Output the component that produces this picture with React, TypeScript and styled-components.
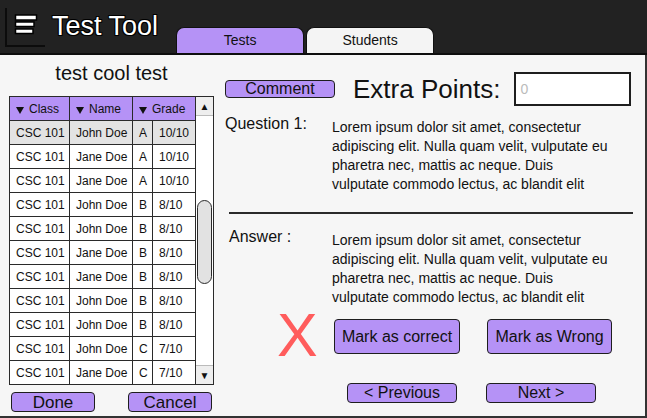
import React from "react";
import styled, { createGlobalStyle } from "styled-components";

const PURPLE = "#b592f6";
const INK = "#1e1e1e";

interface Row {
  name: string;
  letter: string;
  score: string;
}

const rows: Row[] = [
  { name: "John Doe", letter: "A", score: "10/10" },
  { name: "Jane Doe", letter: "A", score: "10/10" },
  { name: "Jane Doe", letter: "A", score: "10/10" },
  { name: "John Doe", letter: "B", score: "8/10" },
  { name: "John Doe", letter: "B", score: "8/10" },
  { name: "Jane Doe", letter: "B", score: "8/10" },
  { name: "Jane Doe", letter: "B", score: "8/10" },
  { name: "John Doe", letter: "B", score: "8/10" },
  { name: "John Doe", letter: "B", score: "8/10" },
  { name: "John Doe", letter: "C", score: "7/10" },
  { name: "Jane Doe", letter: "C", score: "7/10" },
];

const lorem =
  "Lorem ipsum dolor sit amet, consectetur adipiscing elit. Nulla quam velit, vulputate eu pharetra nec, mattis ac neque. Duis vulputate commodo lectus, ac blandit elit";

const Logo = () => (
  <LogoBox viewBox="0 0 52 53" width={52} height={53}>
    <path d="M6 8 V46 H45" fill="none" stroke="#0c0c0c" strokeWidth={2} />
    <rect x={15.5} y={15} width={21} height={5} fill="#fff" stroke="#000" strokeWidth={1.5} />
    <rect x={15.5} y={22} width={18.5} height={4.5} fill="#fff" stroke="#000" strokeWidth={1.5} />
    <rect x={15.5} y={29} width={17.5} height={4.5} fill="#fff" stroke="#000" strokeWidth={1.5} />
  </LogoBox>
);

const App = () => {
  return (
    <>
      <GlobalStyle />
      <Frame>
        <Header>
          <Logo />
          <Title>Test Tool</Title>
          <Tabs>
            <Tab $active>Tests</Tab>
            <Tab>Students</Tab>
          </Tabs>
        </Header>
        <Body>
          <LeftPanel>
            <ListTitle>test cool test</ListTitle>
            <TableArea>
              <GradeTable>
                <colgroup>
                  <col style={{ width: 60 }} />
                  <col style={{ width: 63 }} />
                  <col style={{ width: 20 }} />
                  <col style={{ width: 43 }} />
                </colgroup>
                <thead>
                  <tr>
                    <th>
                      <Caret />Class
                    </th>
                    <th>
                      <Caret />Name
                    </th>
                    <th colSpan={2}>
                      <Caret />Grade
                    </th>
                  </tr>
                </thead>
                <tbody>
                  {rows.map((r, i) => (
                    <BodyRow key={i} $selected={i === 0}>
                      <td>CSC 101</td>
                      <td>{r.name}</td>
                      <td>{r.letter}</td>
                      <td>{r.score}</td>
                    </BodyRow>
                  ))}
                </tbody>
              </GradeTable>
              <Scrollbar>
                <ScrollArrow $top>▲</ScrollArrow>
                <Track>
                  <Thumb />
                </Track>
                <ScrollArrow>▼</ScrollArrow>
              </Scrollbar>
            </TableArea>
            <ListActions>
              <Button $w={84} $h={20} $fs={17}>
                Done
              </Button>
              <Button $w={84} $h={20} $fs={17}>
                Cancel
              </Button>
            </ListActions>
          </LeftPanel>
          <RightPanel>
            <TopRow>
              <Button $w={110} $h={18} $fs={16}>
                Comment
              </Button>
              <ExtraLabel>Extra Points:</ExtraLabel>
              <PointsInput placeholder="0" />
            </TopRow>
            <QaRow>
              <QaLabel>Question 1:</QaLabel>
              <QaText>{lorem}</QaText>
            </QaRow>
            <Divider />
            <QaRow $answer>
              <QaLabel $indent={4}>Answer :</QaLabel>
              <QaText>{lorem}</QaText>
            </QaRow>
            <MarkRow>
              <WrongMark>X</WrongMark>
              <Button $w={126} $h={35} $fs={16}>
                Mark as correct
              </Button>
              <Button $w={125} $h={35} $fs={16}>
                Mark as Wrong
              </Button>
            </MarkRow>
            <NavRow>
              <Button $w={110} $h={20} $fs={16}>
                &lt; Previous
              </Button>
              <Button $w={110} $h={20} $fs={16}>
                Next &gt;
              </Button>
            </NavRow>
          </RightPanel>
        </Body>
      </Frame>
    </>
  );
};

export default App;

const GlobalStyle = createGlobalStyle`
  html, body {
    margin: 0;
    padding: 0;
    background: #f6f6f6;
  }
  body {
    font-family: "Liberation Sans", Arial, sans-serif;
    color: #111;
  }
  * {
    box-sizing: border-box;
  }
`;

const Frame = styled.div`
  width: 647px;
  height: 418px;
  display: flex;
  flex-direction: column;
  overflow: hidden;
`;

const Header = styled.header`
  height: 55px;
  flex-shrink: 0;
  display: flex;
  background: #222;
  border-bottom: 2px solid #0e0e0e;
`;

const LogoBox = styled.svg`
  display: block;
  flex-shrink: 0;
`;

const Title = styled.h1`
  margin: 10px 0 0;
  align-self: flex-start;
  font-size: 27px;
  line-height: 32px;
  font-weight: 400;
  letter-spacing: 0;
  color: #fff;
  text-shadow: -1px -1px 0 #000, 1px -1px 0 #000, -1px 1px 0 #000, 1px 1px 0 #000;
`;

const Tabs = styled.nav`
  display: flex;
  gap: 2px;
  align-self: flex-end;
  margin-left: 18px;
`;

const Tab = styled.div<{ $active?: boolean }>`
  width: 128px;
  height: 26px;
  display: flex;
  align-items: center;
  justify-content: center;
  padding-bottom: 1px;
  font-size: 14px;
  color: #111;
  background: ${({ $active }) => ($active ? PURPLE : "#f4f4f4")};
  border: 1.5px solid #111;
  border-bottom: none;
  border-radius: 8px 8px 0 0;
`;

const Body = styled.main`
  flex: 1;
  display: flex;
  background: #f6f6f6;
  border-right: 2px solid #333;
  border-bottom: 2px solid #333;
`;

const LeftPanel = styled.section`
  width: 218px;
  flex-shrink: 0;
  padding-left: 9px;
  display: flex;
  flex-direction: column;
`;

const ListTitle = styled.h2`
  width: 205px;
  margin: 7px 0 11px;
  text-align: center;
  font-size: 20px;
  line-height: 23px;
  font-weight: 400;
`;

const TableArea = styled.div`
  display: flex;
  width: 205px;
`;

const GradeTable = styled.table`
  width: 186px;
  table-layout: fixed;
  border-collapse: collapse;
  border: 1.5px solid #2a2a2a;
  background: #fff;
  font-size: 12px;

  th,
  td {
    height: 24px;
    padding: 0 0 0 6px;
    border: 1px solid #2a2a2a;
    text-align: left;
    white-space: nowrap;
    overflow: hidden;
  }

  th {
    background: ${PURPLE};
    font-weight: 400;
  }
`;

const Caret = styled.span`
  display: inline-block;
  width: 0;
  height: 0;
  margin: 0 5px 0 0;
  border-left: 4px solid transparent;
  border-right: 4px solid transparent;
  border-top: 7px solid #111;
  vertical-align: -1px;
`;

const BodyRow = styled.tr<{ $selected?: boolean }>`
  background: ${({ $selected }) => ($selected ? "#e3e3e3" : "#fff")};
`;

const Scrollbar = styled.div`
  width: 19px;
  display: flex;
  flex-direction: column;
  background: #fff;
  border: 1px solid #2a2a2a;
  border-left: none;
`;

const ScrollArrow = styled.div<{ $top?: boolean }>`
  height: 19px;
  display: flex;
  align-items: center;
  justify-content: center;
  font-size: 10px;
  background: #eeeeee;
  ${({ $top }) =>
    $top ? "border-bottom: 1px solid #bbb;" : "border-top: 1px solid #bbb;"}
`;

const Track = styled.div`
  flex: 1;
  padding: 84px 1px 0;
`;

const Thumb = styled.div`
  height: 84px;
  border: 1px solid #2a2a2a;
  border-radius: 8px;
  background: #e2e2e2;
`;

const ListActions = styled.div`
  width: 205px;
  margin-top: 7px;
  padding: 0 2px;
  display: flex;
  justify-content: space-between;
`;

const Button = styled.button<{ $w: number; $h: number; $fs: number }>`
  width: ${({ $w }) => $w}px;
  height: ${({ $h }) => $h}px;
  padding: 0;
  font-family: "Liberation Sans", Arial, sans-serif;
  font-size: ${({ $fs }) => $fs}px;
  line-height: 1;
  color: #111;
  background: ${PURPLE};
  border: 1.5px solid ${INK};
  border-radius: 4px;
  flex-shrink: 0;
`;

const RightPanel = styled.section`
  flex: 1;
  padding: 17px 0 0 7px;
  display: flex;
  flex-direction: column;
`;

const TopRow = styled.div`
  display: flex;
  align-items: center;
  height: 34px;
`;

const ExtraLabel = styled.span`
  margin-left: 18px;
  font-size: 26px;
  line-height: 30px;
`;

const PointsInput = styled.input`
  width: 117px;
  height: 34px;
  margin-left: 14px;
  padding: 0 4px;
  border: 2px solid ${INK};
  background: #fff;
  font-family: "Liberation Sans", Arial, sans-serif;
  font-size: 14px;
  outline: none;

  &::placeholder {
    color: #bbb;
  }
`;

const QaRow = styled.div<{ $answer?: boolean }>`
  display: flex;
  align-items: flex-start;
  margin-top: ${({ $answer }) => ($answer ? 17 : 12)}px;
`;

const QaLabel = styled.span<{ $indent?: number }>`
  width: ${({ $indent = 0 }) => 107 - $indent}px;
  margin-left: ${({ $indent = 0 }) => $indent}px;
  font-size: 16px;
  line-height: 12px;
`;

const QaText = styled.p`
  width: 277px;
  margin: 0;
  font-size: 14px;
  line-height: 19px;
`;

const Divider = styled.hr`
  margin: 18px 12px 0 4px;
  height: 2px;
  border: none;
  background: #2a2a2a;
`;

const MarkRow = styled.div`
  display: flex;
  align-items: center;
  margin-top: 9px;
  padding-left: 52px;
  gap: 27px;
`;

const WrongMark = styled.span`
  width: 40px;
  margin-right: -10px;
  margin-top: -3px;
  font-size: 61px;
  line-height: 44px;
  height: 44px;
  color: #ff5c5c;
`;

const NavRow = styled.div`
  display: flex;
  margin-top: 26px;
  padding-left: 122px;
  gap: 29px;
`;
